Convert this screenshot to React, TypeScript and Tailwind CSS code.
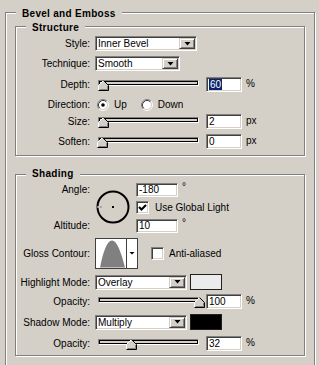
import React from "react";

// Win-classic bevels
const sunken =
  "border border-t-[#808080] border-l-[#808080] border-b-white border-r-white shadow-[inset_1px_1px_0_#404040,inset_-1px_-1px_0_#d4d0c8]";
const raised =
  "border border-t-[#d4d0c8] border-l-[#d4d0c8] border-b-[#404040] border-r-[#404040] shadow-[inset_1px_1px_0_#fff,inset_-1px_-1px_0_#808080]";

function GroupBox({
  title,
  titleTop,
  className,
  children,
}: {
  title: string;
  titleTop: string;
  className: string;
  children: React.ReactNode;
}) {
  return (
    <div className={`relative border border-[#808080] shadow-[inset_1px_1px_0_#fff,1px_1px_0_#fff] ${className}`}>
      <span className={`absolute left-[10px] px-[6px] bg-[#d4d0c8] font-bold text-[10px] leading-[12px] tracking-[0.3px] ${titleTop}`}>
        {title}
      </span>
      {children}
    </div>
  );
}

function Label({ children }: { children: React.ReactNode }) {
  return <div className="w-[74px] shrink-0 text-right leading-[15px] whitespace-nowrap">{children}</div>;
}

function Arrow() {
  return (
    <svg width="7" height="4" viewBox="0 0 7 4">
      <polygon points="0.5,0 6.5,0 3.5,3.5" fill="#000" />
    </svg>
  );
}

function Select({ value, w }: { value: string; w: string }) {
  return (
    <div className={`flex h-[15px] p-px bg-white ${sunken} ${w}`}>
      <span className="flex-1 pl-[1px] leading-[11px] whitespace-nowrap">{value}</span>
      <span className={`w-[16px] h-full flex items-center justify-center bg-[#d4d0c8] ${raised}`}>
        <Arrow />
      </span>
    </div>
  );
}

function Field({ value, w, selected }: { value: string; w: string; selected?: boolean }) {
  return (
    <div className={`h-[15px] bg-white pl-[2px] leading-[13px] ${sunken} ${w}`}>
      {selected ? <span className="bg-[#0a246a] text-white px-[1px]">{value}</span> : value}
    </div>
  );
}

function Thumb({ left }: { left: number }) {
  return (
    <svg className="absolute top-0" style={{ left }} width="11" height="11" viewBox="0 0 11 11">
      <polygon points="5.5,0.5 10.5,5.5 10.5,10.5 0.5,10.5 0.5,5.5" fill="#d4d0c8" />
      <path d="M0.5,10 V5.5 L5.5,0.5" stroke="#fff" fill="none" />
      <path d="M5.5,0.5 L10.5,5.5 V10.5 H0.5" stroke="#000" fill="none" />
      <path d="M9.5,6 V9.5 H1.5" stroke="#808080" fill="none" />
    </svg>
  );
}

function Slider({ left }: { left: number }) {
  return (
    <div className="relative ml-[3px] w-[101px] h-[15px] pt-[3px]">
      <div className="h-[6px] border border-t-[#808080] border-l-[#808080] border-b-white border-r-white">
        <div className="h-full border border-black bg-[#d4d0c8]" />
      </div>
      <div className="absolute top-[3px] left-0">
        <Thumb left={left} />
      </div>
    </div>
  );
}

function Radio({ checked }: { checked?: boolean }) {
  return (
    <svg width="12" height="12" viewBox="0 0 12 12">
      <circle cx="6" cy="6" r="4.5" fill="#fff" />
      <path d="M9.89,2.11 A5.5,5.5 0 0 0 2.11,9.89" stroke="#808080" fill="none" />
      <path d="M9.89,2.11 A5.5,5.5 0 0 1 2.11,9.89" stroke="#fff" fill="none" />
      <path d="M9.18,2.82 A4.5,4.5 0 0 0 2.82,9.18" stroke="#404040" fill="none" />
      <path d="M9.18,2.82 A4.5,4.5 0 0 1 2.82,9.18" stroke="#d4d0c8" fill="none" />
      {checked && <circle cx="6" cy="6" r="1.8" fill="#000" />}
    </svg>
  );
}

function Checkbox({ checked }: { checked?: boolean }) {
  return (
    <div className={`w-[13px] h-[13px] bg-white shrink-0 flex items-center justify-center ${sunken}`}>
      {checked && (
        <svg width="9" height="9" viewBox="0 0 9 9">
          <path d="M1,4 L3.5,6.5 L8,2" stroke="#000" strokeWidth="2" fill="none" />
        </svg>
      )}
    </div>
  );
}

function AngleDial() {
  return (
    <svg width="34" height="34" viewBox="0 0 34 34">
      <circle cx="17" cy="17" r="15.5" stroke="#000" strokeWidth="2" fill="none" />
      <line x1="1" y1="17" x2="3.5" y2="17" stroke="#fff" strokeWidth="1" />
      <line x1="3.5" y1="17" x2="6" y2="17" stroke="#808080" strokeWidth="1" />
      <rect x="16" y="16" width="2" height="2" fill="#000" />
    </svg>
  );
}

function Contour() {
  return (
    <svg width="43" height="31" viewBox="0 0 43 31">
      <rect x="0.5" y="0.5" width="42" height="30" fill="#fff" stroke="#404040" />
      <path d="M5,29.5 C8,14 12,2.5 17,2.5 C22,2.5 26,14 30,29.5 Z" fill="#808080" />
      <line x1="31.5" y1="1" x2="31.5" y2="30" stroke="#404040" />
      <polygon points="34.5,14 39.5,14 37,16.5" fill="#000" />
    </svg>
  );
}

export default function App() {
  return (
    <div className="w-[319px] h-[365px] overflow-hidden bg-[#d4d0c8] pl-[5px] pt-[12px] font-['Liberation_Sans',Arial,sans-serif] text-[10px] text-black">
      <GroupBox title="Bevel and Emboss" titleTop="top-[-5px]" className="w-[310px] pl-[9px] pt-[13px] pb-[20px]">
        {/* Structure */}
        <GroupBox title="Structure" titleTop="top-[-5px]" className="w-[290px] pt-[9px] pb-[6px]">
          <div className="flex items-center h-[15px]">
            <Label>Style:</Label>
            <div className="ml-[5px]">
              <Select value="Inner Bevel" w="w-[102px]" />
            </div>
          </div>
          <div className="flex items-center h-[15px] mt-[5px]">
            <Label>Technique:</Label>
            <div className="ml-[5px]">
              <Select value="Smooth" w="w-[85px]" />
            </div>
          </div>
          <div className="flex items-start h-[15px] mt-[6px]">
            <Label>Depth:</Label>
            <div className="ml-[5px]">
              <Slider left={0} />
            </div>
            <div className="ml-[7px]">
              <Field value="60" w="w-[36px]" selected />
            </div>
            <span className="ml-[4px] leading-[13px]">%</span>
          </div>
          <div className="flex items-center h-[15px] mt-[5px]">
            <Label>Direction:</Label>
            <div className="ml-[7px] flex items-center">
              <Radio checked />
            </div>
            <span className="ml-[5px]">Up</span>
            <div className="ml-[14px] flex items-center">
              <Radio />
            </div>
            <span className="ml-[5px]">Down</span>
          </div>
          <div className="flex items-start h-[15px] mt-[2px]">
            <Label>Size:</Label>
            <div className="ml-[5px]">
              <Slider left={0} />
            </div>
            <div className="ml-[7px]">
              <Field value="2" w="w-[36px]" />
            </div>
            <span className="ml-[4px] leading-[13px]">px</span>
          </div>
          <div className="flex items-start h-[15px] mt-[5px]">
            <Label>Soften:</Label>
            <div className="ml-[5px]">
              <Slider left={-1} />
            </div>
            <div className="ml-[7px]">
              <Field value="0" w="w-[36px]" />
            </div>
            <span className="ml-[4px] leading-[13px]">px</span>
          </div>
        </GroupBox>

        {/* Shading */}
        <GroupBox title="Shading" titleTop="top-[-7px]" className="w-[290px] mt-[18px] pt-[8px] pb-[4px]">
          <div className="flex items-start h-[50px]">
            <div className="w-[74px] shrink-0 text-right">
              <div className="leading-[14px]">Angle:</div>
              <div className="leading-[14px] mt-[22px]">Altitude:</div>
            </div>
            <div className="ml-[6px] mt-[7px]">
              <AngleDial />
            </div>
            <div className="ml-[6px] flex flex-col">
              <div className="flex items-start">
                <div className={`h-[14px] w-[42px] bg-white pl-[2px] leading-[12px] ${sunken}`}>-180</div>
                <span className="ml-[4px] leading-[8px]">°</span>
              </div>
              <div className="flex items-center mt-[4px] h-[13px]">
                <Checkbox checked />
                <span className="ml-[6px] leading-[13px]">Use Global Light</span>
              </div>
              <div className="flex items-start mt-[5px]">
                <div className={`h-[14px] w-[42px] bg-white pl-[2px] leading-[12px] ${sunken}`}>10</div>
                <span className="ml-[4px] leading-[8px]">°</span>
              </div>
            </div>
          </div>

          <div className="flex items-center h-[31px] mt-[5px]">
            <Label>Gloss Contour:</Label>
            <div className="ml-[5px] flex">
              <Contour />
            </div>
            <div className="ml-[13px]">
              <Checkbox />
            </div>
            <span className="ml-[5px]">Anti-aliased</span>
          </div>

          <div className="flex items-center h-[16px] mt-[5px]">
            <Label>Highlight Mode:</Label>
            <div className="ml-[5px]">
              <Select value="Overlay" w="w-[92px]" />
            </div>
            <div className="ml-[3px] w-[32px] h-[16px] bg-[#ebebeb] border border-[#202020]" />
          </div>

          <div className="flex items-start h-[15px] mt-[4px]">
            <Label>Opacity:</Label>
            <div className="ml-[5px]">
              <Slider left={96} />
            </div>
            <div className="ml-[7px]">
              <Field value="100" w="w-[36px]" />
            </div>
            <span className="ml-[4px] leading-[13px]">%</span>
          </div>

          <div className="flex items-center h-[16px] mt-[5px]">
            <Label>Shadow Mode:</Label>
            <div className="ml-[5px]">
              <Select value="Multiply" w="w-[92px]" />
            </div>
            <div className="ml-[3px] w-[32px] h-[16px] bg-black border border-[#202020]" />
          </div>

          <div className="flex items-start h-[15px] mt-[6px]">
            <Label>Opacity:</Label>
            <div className="ml-[5px]">
              <Slider left={28} />
            </div>
            <div className="ml-[7px]">
              <Field value="32" w="w-[36px]" />
            </div>
            <span className="ml-[4px] leading-[13px]">%</span>
          </div>
        </GroupBox>
      </GroupBox>
    </div>
  );
}
